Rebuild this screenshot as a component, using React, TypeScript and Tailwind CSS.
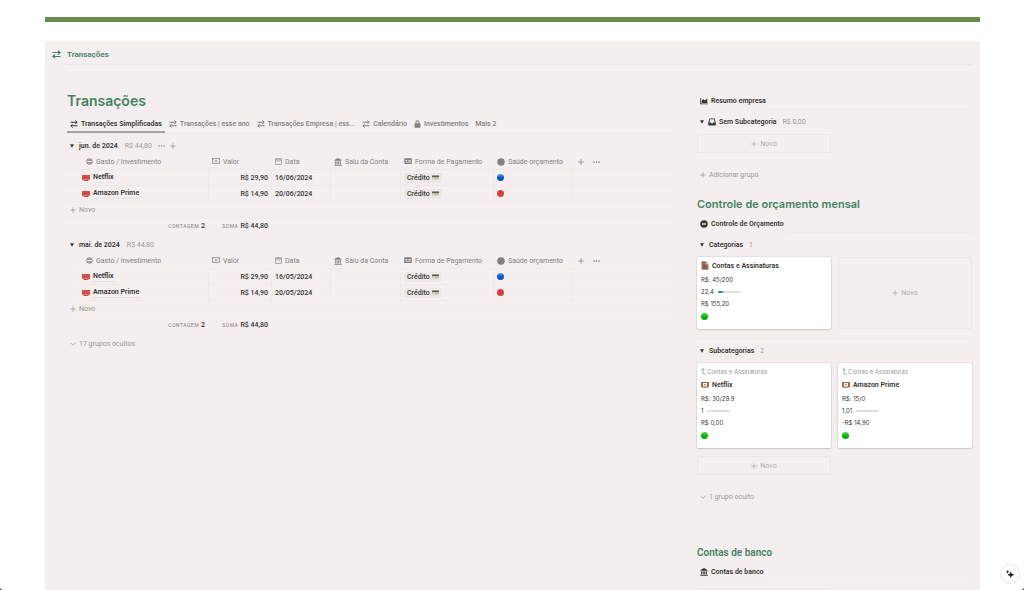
import type { ReactNode } from 'react';
import { clsx } from 'clsx';

type IconProps = { className?: string };

type Expense = {
  name: string;
  value: string;
  date: string;
  health: 'blue' | 'red';
};

type Month = {
  label: string;
  total: string;
  hovered?: boolean;
  expenses: Expense[];
};

const months: Month[] = [
  {
    label: 'jun. de 2024',
    total: 'R$ 44,80',
    hovered: true,
    expenses: [
      { name: 'Netflix', value: 'R$ 29,90', date: '16/06/2024', health: 'blue' },
      { name: 'Amazon Prime', value: 'R$ 14,90', date: '20/06/2024', health: 'red' },
    ],
  },
  {
    label: 'mai. de 2024',
    total: 'R$ 44,80',
    expenses: [
      { name: 'Netflix', value: 'R$ 29,90', date: '16/05/2024', health: 'blue' },
      { name: 'Amazon Prime', value: 'R$ 14,90', date: '20/05/2024', health: 'red' },
    ],
  },
];

function SwapIcon({ className }: IconProps) {
  return (
    <svg viewBox="0 0 16 16" className={className} fill="none" stroke="currentColor" strokeWidth="2">
      <path d="M1 4.5h13M10.5 1l4 3.5-4 3.500M15 11.500H2M5.500 8l-4 3.500 4 3.500" />
    </svg>
  );
}

function MinusCircleIcon({ className }: IconProps) {
  return (
    <svg viewBox="0 0 16 16" className={className} fill="currentColor">
      <path
        fillRule="evenodd"
        d="M8 .5a7.500 7.500 0 1 0 0 15 7.500 7.500 0 0 0 0-15ZM4.200 6.600h7.600v2.800H4.200Z"
      />
    </svg>
  );
}

function RingMinusIcon({ className }: IconProps) {
  return (
    <svg viewBox="0 0 16 16" className={className} fill="none" stroke="currentColor">
      <circle cx="8" cy="8" r="6.500" strokeWidth="2" />
      <path d="M2.500 4.800h11M2.500 11.200h11" strokeWidth="3" />
    </svg>
  );
}

function MoneyIcon({ className }: IconProps) {
  return (
    <svg viewBox="0 0 18 14" className={className} fill="none" stroke="currentColor" strokeWidth="1.500">
      <rect x="1" y="1.500" width="16" height="11" />
      <circle cx="9" cy="7" r="2.200" />
      <path d="M1 4.500 4 1.500M17 4.500l-3-3M1 9.500l3 3M17 9.500l-3 3" />
    </svg>
  );
}

function CalendarIcon({ className }: IconProps) {
  return (
    <svg viewBox="0 0 16 16" className={className} fill="none" stroke="currentColor" strokeWidth="1.500">
      <rect x="1" y="1.500" width="14" height="13" rx="1" />
      <path d="M1 4.500h14" strokeWidth="2" />
      <path d="M10 8h2M4 8h2" />
    </svg>
  );
}

function BankIcon({ className }: IconProps) {
  return (
    <svg viewBox="0 0 16 16" className={className} fill="currentColor">
      <path d="M8 0 .8 3.800v1.700h14.400V3.800ZM2.300 6.500h2v6h-2zM5.500 6.500h1.900v6H5.500zM8.600 6.500h1.900v6H8.600zM11.700 6.500h2v6h-2zM.5 13.300h15v2H.5z" />
    </svg>
  );
}

function IdCardIcon({ className }: IconProps) {
  return (
    <svg viewBox="0 0 18 14" className={className} fill="currentColor">
      <path
        fillRule="evenodd"
        d="M1.500.5h15a1 1 0 0 1 1 1v11a1 1 0 0 1-1 1h-15a1 1 0 0 1-1-1v-11a1 1 0 0 1 1-1ZM3.500 4.500V8H7V4.500Zm6 0V6H15V4.500Zm0 3v1.200H15V7.500ZM3.500 10v1.200H15V10Z"
      />
    </svg>
  );
}

function LockIcon({ className }: IconProps) {
  return (
    <svg viewBox="0 0 14 16" className={className}>
      <path d="M4 7V4.500a3 3 0 0 1 6 0V7" fill="none" stroke="currentColor" strokeWidth="2.200" />
      <rect x="1" y="6.500" width="12" height="9" rx="1" fill="currentColor" />
    </svg>
  );
}

function ChartIcon({ className }: IconProps) {
  return (
    <svg viewBox="0 0 16 16" className={className} fill="currentColor">
      <path d="M.5 2h1.800v10.800h13.200v1.700H.5ZM3.500 11.800V7.500L6.500 4l3 3 5-4.500v9.300Z" />
    </svg>
  );
}

function InboxIcon({ className }: IconProps) {
  return (
    <svg viewBox="0 0 16 16" className={className} fill="currentColor">
      <path
        fillRule="evenodd"
        d="M3 .8h10L15.500 9v5a1.200 1.200 0 0 1-1.200 1.200H1.700A1.200 1.200 0 0 1 .5 14V9ZM4.300 2.500 2.500 9h3.200c.2 1.500 1 2.200 2.300 2.200s2.100-.7 2.300-2.200h3.200l-1.800-6.500Z"
      />
    </svg>
  );
}

function ScreenIcon({ className }: IconProps) {
  return (
    <svg viewBox="0 0 16 12" className={className} fill="currentColor">
      <path d="M0 0h16v9.500H0zM3 10h10v2H3z" />
    </svg>
  );
}

function VideoIcon({ className }: IconProps) {
  return (
    <svg viewBox="0 0 16 13" className={className} fill="currentColor">
      <path fillRule="evenodd" d="M0 0h16v10.500H0ZM4 1.800v7h8v-7ZM3 11h10v2H3z" />
      <path d="m6.500 3 4 2.300-4 2.300Z" />
    </svg>
  );
}

function DocumentIcon({ className }: IconProps) {
  return (
    <svg viewBox="0 0 14 16" className={className}>
      <path d="M1 .5h7.500v5H13v10H1Z" fill="#9f6b53" />
      <path d="M9.500.5 13 4.500H9.500Z" fill="#9f6b53" />
      <path d="M3.200 7h5M3.200 9.500h7M3.200 12h7" stroke="#7c4a36" />
    </svg>
  );
}

function CreditCardIcon({ className }: IconProps) {
  return (
    <svg viewBox="0 0 16 12" className={className}>
      <rect width="16" height="12" rx="1.500" fill="#d9d6cf" />
      <path d="M0 1.500A1.500 1.500 0 0 1 1.500 0h13A1.500 1.500 0 0 1 16 1.500V2H0Z" fill="#a5a198" />
      <path d="M0 2h16v3H0Z" fill="#5b5850" />
      <path d="M8 7h6v2H8Z" fill="#b59f63" />
    </svg>
  );
}

function PlusIcon({ className }: IconProps) {
  return (
    <svg viewBox="0 0 12 12" className={className} fill="none" stroke="currentColor" strokeWidth="1.500">
      <path d="M6 .5v11M.5 6h11" />
    </svg>
  );
}

function DotsIcon({ className }: IconProps) {
  return (
    <svg viewBox="0 0 14 4" className={className} fill="currentColor">
      <circle cx="2" cy="2" r="1.700" />
      <circle cx="7" cy="2" r="1.700" />
      <circle cx="12" cy="2" r="1.700" />
    </svg>
  );
}

function ChevronIcon({ className }: IconProps) {
  return (
    <svg viewBox="0 0 12 12" className={className} fill="none" stroke="currentColor" strokeWidth="1.600">
      <path d="m1 3.500 5 5 5-5" />
    </svg>
  );
}

function TriangleIcon({ className }: IconProps) {
  return (
    <svg viewBox="0 0 10 10" className={className} fill="currentColor">
      <path d="M0 .5h10l-5 9Z" />
    </svg>
  );
}

function ParentIcon({ className }: IconProps) {
  return (
    <svg viewBox="0 0 10 14" className={className} fill="none" stroke="currentColor" strokeWidth="1.600">
      <path d="M.5 4.500 4 1l3.500 3.500M4 1v9.500a2 2 0 0 0 2 2h3.500" />
    </svg>
  );
}

function DotIcon({ className }: IconProps) {
  return (
    <svg viewBox="0 0 16 16" className={className} fill="currentColor">
      <circle cx="8" cy="8" r="7.500" />
    </svg>
  );
}

function Ball({ color }: { color: 'blue' | 'red' | 'green' }) {
  return (
    <span
      className={clsx(
        'block size-[7px] rounded-full bg-linear-to-b',
        color === 'blue' && 'from-[#5d9cf0] via-[#0a55d0] to-[#0a50c8]',
        color === 'red' && 'from-[#d9403d] to-[#d9403d]',
        color === 'green' && 'size-[6px] from-[#4fdc4a] via-[#0bb80b] to-[#08a508]',
      )}
    />
  );
}

function ColumnHeader({ icon, children }: { icon: ReactNode; children: ReactNode }) {
  return (
    <th scope="col" className="h-4 border-b border-[#eee8e7] p-0 pl-[3px] text-left font-normal">
      <span className="flex items-center gap-[3px] whitespace-nowrap">
        {icon}
        {children}
      </span>
    </th>
  );
}

function Calculation({ label, value }: { label: string; value: string }) {
  return (
    <>
      <span className="mr-[2px] text-[5px] tracking-widest text-[#84807d] uppercase">{label}</span>
      <span className="font-medium">{value}</span>
    </>
  );
}

function MonthGroup({ month }: { month: Month }) {
  const cell = 'h-4 border-b border-r border-[#eee8e7] p-0 px-[3px]';
  return (
    <section>
      <div className="flex h-4 items-center pl-[3px] text-[#9b9794]">
        <button type="button" aria-label={`Recolher ${month.label}`} className="text-[#37352f]">
          <TriangleIcon className="size-1" />
        </button>
        <h2 className="ml-[5px] font-semibold text-[#37352f]">{month.label}</h2>
        <span className="ml-[7px]">{month.total}</span>
        {month.hovered && (
          <>
            <button type="button" aria-label="Mais opções" className="ml-[6px]">
              <DotsIcon className="w-[7px]" />
            </button>
            <button type="button" aria-label="Adicionar" className="ml-[5px]">
              <PlusIcon className="size-[6px]" />
            </button>
          </>
        )}
      </div>
      <table className="w-full table-fixed border-separate border-spacing-0">
        <colgroup>
          <col className="w-[142px]" />
          <col className="w-[63px]" />
          <col className="w-[59px]" />
          <col className="w-[70px]" />
          <col className="w-[93px]" />
          <col className="w-[79px]" />
          <col />
        </colgroup>
        <thead className="text-[#84807d]">
          <tr>
            <th scope="col" className="h-4 border-b border-[#eee8e7] p-0 pl-[19px] text-left font-normal">
              <span className="flex items-center gap-[3px]">
                <RingMinusIcon className="size-[7px]" />
                Gasto / Investimento
              </span>
            </th>
            <ColumnHeader icon={<MoneyIcon className="w-[8px]" />}>Valor</ColumnHeader>
            <ColumnHeader icon={<CalendarIcon className="size-[7px]" />}>Data</ColumnHeader>
            <ColumnHeader icon={<BankIcon className="size-[8px]" />}>Saiu da Conta</ColumnHeader>
            <ColumnHeader icon={<IdCardIcon className="w-[8px]" />}>Forma de Pagamento</ColumnHeader>
            <ColumnHeader icon={<DotIcon className="size-[8px]" />}>Saúde orçamento</ColumnHeader>
            <th className="h-4 border-b border-[#eee8e7] p-0 pl-[5px]">
              <span className="flex items-center gap-[9px]">
                <button type="button" aria-label="Adicionar propriedade">
                  <PlusIcon className="size-[6px]" />
                </button>
                <button type="button" aria-label="Propriedades">
                  <DotsIcon className="w-[7px]" />
                </button>
              </span>
            </th>
          </tr>
        </thead>
        <tbody>
          {month.expenses.map((expense) => (
            <tr key={expense.name}>
              <td className="h-4 border-r border-b border-[#eee8e7] p-0 pl-[15px]">
                <a href="#" className="flex items-center gap-[3px] font-semibold">
                  <ScreenIcon className="w-2 text-[#d44c47]" />
                  <span className="border-b border-[#e6e0de] leading-[9px]">{expense.name}</span>
                </a>
              </td>
              <td className={clsx(cell, 'text-right font-medium')}>{expense.value}</td>
              <td className={clsx(cell, 'font-medium')}>{expense.date}</td>
              <td className={cell} />
              <td className={cell}>
                <span className="flex h-[10px] w-fit items-center gap-[2px] rounded-xs bg-[#ebe8e6] px-[3px] font-medium">
                  Crédito
                  <CreditCardIcon className="w-[7px]" />
                </span>
              </td>
              <td className={cell}>
                <Ball color={expense.health} />
              </td>
              <td className="h-4 border-b border-[#eee8e7] p-0" />
            </tr>
          ))}
        </tbody>
      </table>
      <button
        type="button"
        className="flex h-4 w-full items-center gap-[3px] border-b border-[#eee8e7] pl-[3px] text-[#9b9794]"
      >
        <PlusIcon className="size-[6px]" />
        Novo
      </button>
      <div className="flex h-4 items-center">
        <p className="w-[142px] pr-1 text-right">
          <Calculation label="Contagem" value="2" />
        </p>
        <p className="w-[63px] pr-1 text-right">
          <Calculation label="Soma" value="R$ 44,80" />
        </p>
      </div>
    </section>
  );
}

function ViewTab({ icon, active, children }: { icon?: ReactNode; active?: boolean; children: ReactNode }) {
  return (
    <button
      type="button"
      className={clsx(
        'flex h-[18px] items-center gap-[3px] border-b-2 px-[3px] pt-[2px] whitespace-nowrap',
        active ? 'border-[#a8a19f] font-semibold text-[#37352f]' : 'border-transparent font-medium text-[#84807d]',
      )}
    >
      {icon}
      {children}
    </button>
  );
}

function SingleView({ icon, children }: { icon: ReactNode; children: ReactNode }) {
  return (
    <div className="flex h-[18px]">
      <button type="button" className="flex items-center gap-[3px] px-[3px] font-semibold">
        {icon}
        {children}
      </button>
      <div className="flex-1 border-b border-[#eee8e7]" />
    </div>
  );
}

function GroupHeader({ label, count, icon }: { label: string; count: string; icon?: ReactNode }) {
  return (
    <div className="my-1 flex h-4 items-center pl-[3px]">
      <button type="button" aria-label={`Recolher ${label}`}>
        <TriangleIcon className="size-1" />
      </button>
      {icon}
      <h3 className={clsx('font-semibold', icon ? 'ml-[3px]' : 'ml-[5px]')}>{label}</h3>
      <span className="ml-[6px] text-[#9b9794]">{count}</span>
    </div>
  );
}

function NewCard({ className }: IconProps) {
  return (
    <button
      type="button"
      className={clsx(
        'flex items-center justify-center gap-[3px] rounded-xs border border-[#ebe5e4] text-[#b0aba8]',
        className,
      )}
    >
      <PlusIcon className="size-[6px]" />
      Novo
    </button>
  );
}

type BudgetCardProps = {
  parent?: string;
  icon: ReactNode;
  title: string;
  budget: string;
  ratio: string;
  percent: number;
  remaining: string;
};

function BudgetCard({ parent, icon, title, budget, ratio, percent, remaining }: BudgetCardProps) {
  return (
    <article className="rounded-xs bg-white px-1 pt-[2px] pb-[7px] font-['Inter',sans-serif] text-[6px] leading-3 shadow-[0_1px_2px_#0000001f,0_0_0_1px_#0000000d]">
      {parent && (
        <p className="flex h-[13px] items-center gap-px text-[#9b9794]">
          <ParentIcon className="w-[5px]" />
          {parent}
        </p>
      )}
      <h4 className="mb-px flex h-[14px] items-center gap-[3px] font-['Roboto',sans-serif] text-[7px] font-semibold">
        {icon}
        {title}
      </h4>
      <p>{budget}</p>
      <p className="flex items-center gap-1">
        {ratio}
        <span className="h-[2px] w-[23px] rounded-full bg-[#e3dedb]">
          <span className="block h-full rounded-full bg-[#2f86cf]" style={{ width: `${percent}%` }} />
        </span>
      </p>
      <p>{remaining}</p>
      <div className="flex h-3 items-center">
        <Ball color="green" />
      </div>
    </article>
  );
}

function Transactions() {
  return (
    <section className="min-w-0 flex-1">
      <h1 className="h-[24px] font-['Inter',sans-serif] text-[14px] leading-[20px] font-semibold text-[#448361]">
        Transações
      </h1>
      <nav className="flex gap-px border-b border-[#eee8e7]">
        <ViewTab active icon={<SwapIcon className="size-[8px]" />}>
          Transações Simplificadas
        </ViewTab>
        <ViewTab icon={<SwapIcon className="size-[8px]" />}>Transações | esse ano</ViewTab>
        <ViewTab icon={<SwapIcon className="size-[8px]" />}>Transações Empresa | ess...</ViewTab>
        <ViewTab icon={<SwapIcon className="size-[8px]" />}>Calendário</ViewTab>
        <ViewTab icon={<LockIcon className="h-[8px]" />}>Investimentos</ViewTab>
        <ViewTab>Mais 2</ViewTab>
      </nav>
      <div className="mt-1 flex flex-col gap-[3px]">
        {months.map((month) => (
          <MonthGroup key={month.label} month={month} />
        ))}
        <button type="button" className="flex h-4 items-center gap-[3px] pl-[3px] text-[#9b9794]">
          <ChevronIcon className="size-[6px]" />
          17 grupos ocultos
        </button>
      </div>
    </section>
  );
}

function Summary() {
  return (
    <aside className="w-[275px] shrink-0 pt-px">
      <SingleView icon={<ChartIcon className="size-2" />}>Resumo empresa</SingleView>
      <GroupHeader label="Sem Subcategoria" count="R$ 0,00" icon={<InboxIcon className="ml-1 size-[8px]" />} />
      <NewCard className="h-[19px] w-[134px]" />
      <button type="button" className="mt-[14px] flex h-4 items-center gap-[3px] pl-[3px] text-[#9b9794]">
        <PlusIcon className="size-[6px]" />
        Adicionar grupo
      </button>

      <h2 className="mt-3 h-5 font-['Inter',sans-serif] text-[11px] leading-[18px] font-semibold text-[#448361]">
        Controle de orçamento mensal
      </h2>
      <SingleView icon={<MinusCircleIcon className="size-2" />}>Controle de Orçamento</SingleView>
      <GroupHeader label="Categorias" count="1" />
      <div className="grid grid-cols-2 gap-[7px]">
        <BudgetCard
          icon={<DocumentIcon className="w-2" />}
          title="Contas e Assinaturas"
          budget="R$: 45/200"
          ratio="22,4"
          percent={22}
          remaining="R$ 155,20"
        />
        <NewCard />
      </div>
      <div className="mt-[9px] border-t border-[#eee8e7]" />
      <GroupHeader label="Subcategorias" count="2" />
      <div className="grid grid-cols-2 gap-[7px]">
        <BudgetCard
          parent="Contas e Assinaturas"
          icon={<VideoIcon className="w-2 text-[#9f6b53]" />}
          title="Netflix"
          budget="R$: 30/29.9"
          ratio="1"
          percent={0}
          remaining="R$ 0,00"
        />
        <BudgetCard
          parent="Contas e Assinaturas"
          icon={<VideoIcon className="w-2 text-[#9f6b53]" />}
          title="Amazon Prime"
          budget="R$: 15/0"
          ratio="1,01"
          percent={0}
          remaining="-R$ 14,90"
        />
      </div>
      <NewCard className="mt-2 h-[19px] w-[134px]" />
      <button type="button" className="mt-[14px] flex h-4 items-center gap-[3px] pl-[3px] text-[#9b9794]">
        <ChevronIcon className="size-[6px]" />1 grupo oculto
      </button>

      <h2 className="mt-[38px] h-5 text-[10px] leading-5 font-semibold text-[#448361]">Contas de banco</h2>
      <SingleView icon={<BankIcon className="size-2" />}>Contas de banco</SingleView>
      <div className="mt-[7px] h-[19px] w-[134px] rounded-xs border border-[#ebe5e4]" />
    </aside>
  );
}

export default function App() {
  return (
    <div className="relative flex h-screen flex-col overflow-hidden bg-white font-['Roboto','Liberation_Sans',sans-serif] text-[7px] leading-[10px] text-[#37352f]">
      <div className="mt-[17px] mr-11 ml-[45px] h-[5px] shrink-0 bg-[#6b8a4e]" />
      <main className="mt-[19px] mr-11 ml-[45px] min-h-0 flex-1 rounded-t-xs bg-[#f4eeee] pr-2 pl-[7px]">
        <header className="flex items-center text-[#448361]">
          <SwapIcon className="mt-[3px] size-[9px]" />
          <p className="ml-[5px] flex h-6 flex-1 items-center border-b border-[#ebe5e4] pt-1 pl-px text-[8px] font-semibold">
            Transações
          </p>
        </header>
        <div className="mt-[26px] flex gap-[22px] pl-[15px]">
          <Transactions />
          <Summary />
        </div>
      </main>

      <button
        type="button"
        aria-label="Assistente de IA"
        className="absolute right-[5px] bottom-[7px] flex size-[18px] items-center justify-center rounded-full bg-white shadow-[0_0_2px_#00000040]"
      >
        <svg viewBox="0 0 16 16" className="size-2" fill="#1f1e1b">
          <path d="M10 3.500c.5 3.500 1.500 4.500 5.500 5.200v1.600c-4 .7-5 1.700-5.500 5.200H9c-.5-3.500-1.500-4.500-5-5.200V8.700c3.500-.7 4.500-1.700 5-5.200ZM3.500.5c.3 1.800.8 2.300 2.800 2.700v.9c-2 .4-2.500.9-2.800 2.700h-.7C2.500 5 2 4.500.2 4.100v-.9C2 2.800 2.500 2.300 2.800.5Z" />
        </svg>
      </button>

      {/* rounded window corners */}
      <svg viewBox="0 0 3 3" className="absolute bottom-0 left-0 size-[3px]" fill="#1f1e1b">
        <path d="M0 0Q0 3 3 3H0Z" />
      </svg>
      <svg viewBox="0 0 3 3" className="absolute right-0 bottom-0 size-[3px]" fill="#1f1e1b">
        <path d="M3 0Q3 3 0 3H3Z" />
      </svg>
    </div>
  );
}
